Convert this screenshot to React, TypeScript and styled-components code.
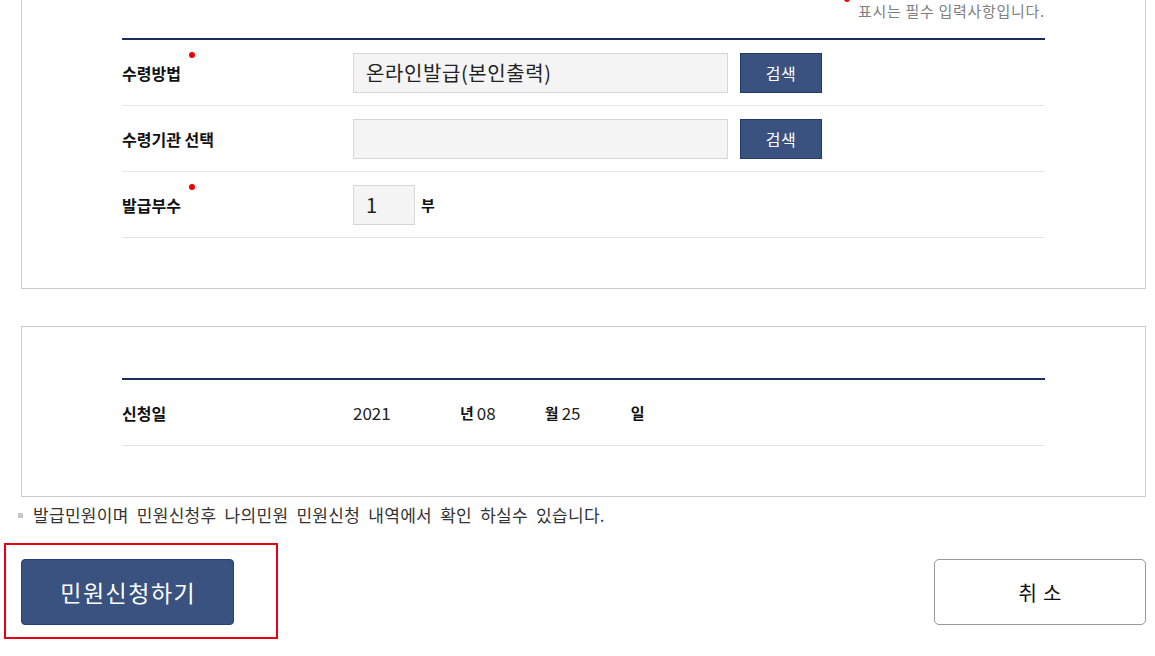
import React from "react";
import styled, { createGlobalStyle } from "styled-components";

const Global = createGlobalStyle`
  html, body { margin: 0; padding: 0; background: #ffffff; }
  body {
    font-family: "Noto Sans CJK KR", "Noto Sans", sans-serif;
    color: #111111;
  }
  * { box-sizing: border-box; }
`;

const Page = styled.div`
  width: 1146px;
  padding: 0 0 31px 21px;
`;

const Panel = styled.section<{ $cutTop?: boolean; $padTop?: number }>`
  border: 1px solid #cccccc;
  border-top: ${(p) => (p.$cutTop ? "none" : "1px solid #cccccc")};
  padding: ${(p) => p.$padTop ?? 0}px 100px 50px;
  margin-top: ${(p) => (p.$cutTop ? 0 : 37)}px;
`;

const RequiredNote = styled.p`
  margin: 0 0 16px;
  text-align: right;
  font-size: 15px;
  letter-spacing: 0.7px;
  line-height: 22px;
  color: #808080;
`;

const Dot = styled.span<{ $lift: number; $gap: number; $before?: boolean }>`
  display: inline-block;
  width: 6px;
  height: 6px;
  border-radius: 50%;
  background: #ee0000;
  vertical-align: top;
  transform: translateY(${(p) => -p.$lift}px);
  margin-left: ${(p) => (p.$before ? 0 : p.$gap)}px;
  margin-right: ${(p) => (p.$before ? p.$gap : 0)}px;
`;

const Table = styled.div`
  border-top: 2px solid #1b2f5c;
`;

const Row = styled.div`
  display: grid;
  grid-template-columns: 231px 1fr;
  align-items: center;
  min-height: 66px;
  border-bottom: 1px solid #e6e6e6;
`;

const Label = styled.div`
  font-size: 16px;
  font-weight: 700;
  line-height: 20px;
  color: #111111;
  white-space: nowrap;
`;

const Field = styled.div`
  display: flex;
  align-items: center;
  gap: 12px;
`;

const TextBox = styled.div<{ $w: number }>`
  width: ${(p) => p.$w}px;
  height: 40px;
  background: #f4f4f4;
  border: 1px solid #d6d6d6;
  padding-left: 12px;
  font-size: 20px;
  letter-spacing: 0.6px;
  line-height: 38px;
  color: #222222;
  white-space: nowrap;
`;

const SearchButton = styled.button`
  width: 82px;
  height: 40px;
  background: #3a5280;
  border: 1px solid #213a6a;
  color: #ffffff;
  font-family: inherit;
  font-size: 16px;
  letter-spacing: 0.5px;
  padding: 0;
  cursor: pointer;
`;

const Unit = styled.span<{ $gap?: number }>`
  font-size: 15px;
  font-weight: 700;
  color: #111111;
  margin-left: ${(p) => p.$gap ?? 0}px;
`;

const DateLine = styled.div`
  display: flex;
  align-items: center;
`;

const DateValue = styled.span<{ $w: number; $gap?: number }>`
  display: inline-block;
  width: ${(p) => p.$w}px;
  margin-left: ${(p) => p.$gap ?? 0}px;
  font-size: 17px;
  color: #222222;
`;

const Info = styled.p`
  margin: 8px 0 0 -3px;
  display: flex;
  align-items: center;
  gap: 10px;
  font-size: 17px;
  line-height: 20px;
  color: #333333;
  word-spacing: 4px;
  letter-spacing: 0.3px;
`;

const Bullet = styled.span`
  width: 5px;
  height: 5px;
  background: #c8c8c8;
  flex: none;
`;

const Actions = styled.div`
  margin-top: 34px;
  display: flex;
  justify-content: space-between;
  align-items: center;
`;

const Highlight = styled.div`
  position: relative;
  &::after {
    content: "";
    position: absolute;
    top: -16px;
    left: -17px;
    right: -44px;
    bottom: -14px;
    border: 2px solid #e60012;
    pointer-events: none;
  }
`;

const PrimaryButton = styled.button`
  display: block;
  width: 213px;
  height: 66px;
  background: #3a5280;
  border: 1px solid #24407a;
  border-radius: 4px;
  color: #ffffff;
  font-family: inherit;
  font-size: 23px;
  letter-spacing: 1.5px;
  text-indent: 1.5px;
  padding: 0;
  cursor: pointer;
`;

const CancelButton = styled.button`
  width: 212px;
  height: 66px;
  background: #ffffff;
  border: 1px solid #999999;
  border-radius: 5px;
  color: #111111;
  font-family: inherit;
  font-size: 20px;
  letter-spacing: 6px;
  text-indent: 6px;
  padding: 0;
  cursor: pointer;
`;

export default function App() {
  return (
    <>
      <Global />
      <Page>
        <Panel $cutTop>
          <RequiredNote>
            <Dot $lift={4} $gap={8} $before />
            표시는 필수 입력사항입니다.
          </RequiredNote>
          <Table>
            <Row>
              <Label>
                수령방법
                <Dot $lift={11} $gap={8} />
              </Label>
              <Field>
                <TextBox $w={375}>온라인발급(본인출력)</TextBox>
                <SearchButton>검색</SearchButton>
              </Field>
            </Row>
            <Row>
              <Label>수령기관 선택</Label>
              <Field>
                <TextBox $w={375} />
                <SearchButton>검색</SearchButton>
              </Field>
            </Row>
            <Row>
              <Label>
                발급부수
                <Dot $lift={11} $gap={8} />
              </Label>
              <Field>
                <TextBox $w={62}>1</TextBox>
                <Unit $gap={-6}>부</Unit>
              </Field>
            </Row>
          </Table>
        </Panel>

        <Panel $padTop={51}>
          <Table>
            <Row>
              <Label>신청일</Label>
              <DateLine>
                <DateValue $w={107}>2021</DateValue>
                <Unit>년</Unit>
                <DateValue $w={68} $gap={3}>08</DateValue>
                <Unit>월</Unit>
                <DateValue $w={69} $gap={3}>25</DateValue>
                <Unit>일</Unit>
              </DateLine>
            </Row>
          </Table>
        </Panel>

        <Info>
          <Bullet />
          발급민원이며 민원신청후 나의민원 민원신청 내역에서 확인 하실수 있습니다.
        </Info>

        <Actions>
          <Highlight>
            <PrimaryButton>민원신청하기</PrimaryButton>
          </Highlight>
          <CancelButton>취소</CancelButton>
        </Actions>
      </Page>
    </>
  );
}
